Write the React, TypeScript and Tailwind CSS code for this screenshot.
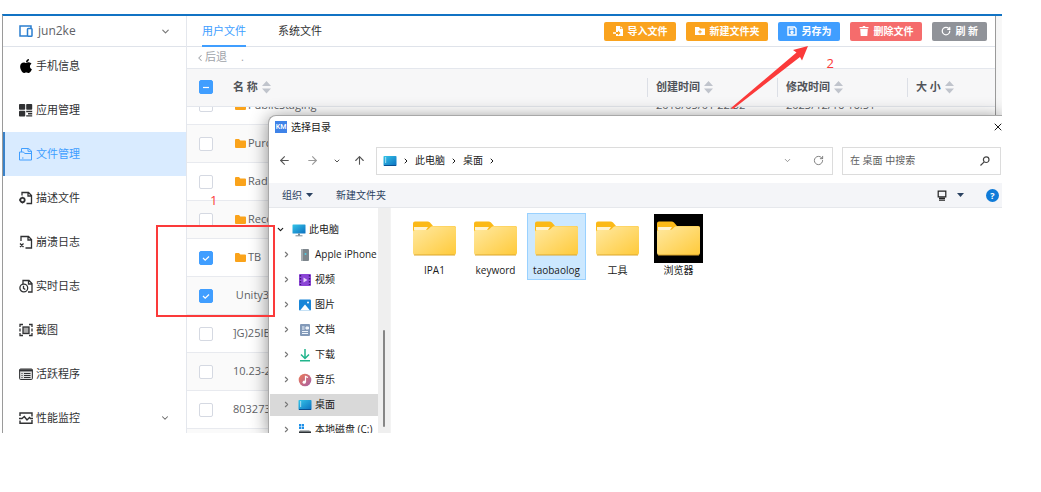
import React from "react";
import { FaApple } from "react-icons/fa";
import {
  ArrowLeft,
  ArrowRight,
  ArrowUp,
  ChevronDown,
  ChevronLeft,
  ChevronRight,
  RotateCw,
  X,
} from "lucide-react";

const files = [
  { name: "PublicStaging", folder: true, created: "2018/05/01 22:52", modified: "2023/12/16 16:51" },
  { name: "Purc", folder: true },
  { name: "Radi", folder: true },
  { name: "Reco", folder: true },
  { name: "TB", folder: true, checked: true },
  { name: " Unity3", checked: true },
  { name: "]G)25IE" },
  { name: "10.23-2" },
  { name: "803273" },
  { name: "" },
];

const docPath = "M4 5V1.5h6L13 4.5V13H9M9.5 1.5V5H13";

const menu = [
  { label: "手机信息", icon: <FaApple className="-mx-px size-4 text-black" /> },
  {
    label: "应用管理",
    icon: (
      <svg viewBox="0 0 14 14" className="size-[14px]" fill="currentColor">
        <rect x="0" y="1" width="6.2" height="5.8" rx="0.8" />
        <rect x="7.2" y="1" width="6" height="5.8" rx="0.8" />
        <rect x="0" y="7.8" width="6.2" height="5.8" rx="0.8" />
        <path d="M7.2 7.8h6v1.500h-6zM9 10h4.200v1.400H9zM7.200 12.200h6v1.400h-6z" />
      </svg>
    ),
  },
  {
    label: "文件管理",
    active: true,
    icon: (
      <svg viewBox="0 0 14 14" className="size-[14px]" fill="none" stroke="currentColor">
        <path d="M2.500 5V1.500h7L12.500 4v9M.5 13V5h4l1.200 1.500h6.800M9 1.500V4.300h3.500M.5 13h12M3 11h1.500" />
      </svg>
    ),
  },
  {
    label: "描述文件",
    icon: (
      <svg viewBox="0 0 14 14" className="size-[14px]" fill="none" stroke="currentColor" strokeWidth="1.3">
        <path d="M3 4.500V1.500h6.500L12.500 4.500V12.500H7.500M9 1.500V5h3.500" />
        <circle cx="3.500" cy="9" r="2.200" strokeWidth="1.800" />
        <path d="M3.500 5.800v1M3.500 11.500v1M.2 9h1" />
      </svg>
    ),
  },
  {
    label: "崩溃日志",
    icon: (
      <svg viewBox="0 0 14 14" className="size-[14px]" fill="none" stroke="currentColor" strokeWidth="1.3">
        <path d="M2 6V1.500h7.500L12.500 4.500V13H6.500M9 1.500V5h3.500M1 8.500l3.500 3.500M4.500 8.500L1 12" />
      </svg>
    ),
  },
  {
    label: "实时日志",
    icon: (
      <svg viewBox="0 0 14 14" className="size-[14px]" fill="none" stroke="currentColor" strokeWidth="1.3">
        <path d={docPath} />
        <circle cx="4.800" cy="9" r="3.900" />
        <path d="M4.500 6.800v2.500l1.800 1.200" />
      </svg>
    ),
  },
  {
    label: "截图",
    icon: (
      <svg viewBox="0 0 14 14" className="size-[14px]" fill="none" stroke="currentColor" strokeWidth="1.3">
        <path d="M1 4V1.500h3M10 1.500h3V4M13 10v2.500h-3M4 12.500H1V10M1 5.500v3M13 5.500v3" />
        <rect x="4" y="4" width="6" height="6.500" fill="#aaa" />
      </svg>
    ),
  },
  {
    label: "活跃程序",
    icon: (
      <svg viewBox="0 0 14 14" className="size-[14px]" fill="none" stroke="currentColor">
        <rect x="0.600" y="2" width="12.800" height="10.500" rx="1" fill="#ddd" />
        <path d="M.6 3.400h12.800" strokeWidth="2" />
        <path d="M2.500 6.500h1M5 6.500h6.500M2.500 8.500h1M5 8.500h6.500M2.500 10.500h1M5 10.500h6.500" />
      </svg>
    ),
  },
  {
    label: "性能监控",
    arrow: true,
    icon: (
      <svg viewBox="0 0 14 14" className="size-[14px]" fill="none" stroke="currentColor" strokeWidth="1.400">
        <path d="M1 5V2h12v3.500M1 9.500v2.700h12V9M0 7.500h3l2.300-2 2.700 3.500 2.500-2.500 1 1H14" />
      </svg>
    ),
  },
];

const tree = [
  {
    label: "Apple iPhone",
    icon: (
      <svg viewBox="0 0 14 14" className="size-[14px]">
        <rect x="3" y="1" width="8" height="12" rx="1" fill="#7d868c" />
        <rect x="3" y="1" width="2" height="12" fill="#a3abb0" />
        <circle cx="7.500" cy="6" r="1" fill="#4fd0e8" />
      </svg>
    ),
  },
  {
    label: "视频",
    icon: (
      <svg viewBox="0 0 14 14" className="size-[14px]">
        <rect x="1" y="1" width="12" height="12" rx="1" fill="#8b45d6" />
        <path d="M2.500 2v10M11.500 2v10" stroke="#3d1673" strokeWidth="1.400" strokeDasharray="1.500 1.500" />
        <path d="M5.500 4.500v5l4-2.500z" fill="#e5d2fb" />
      </svg>
    ),
  },
  {
    label: "图片",
    icon: (
      <svg viewBox="0 0 14 14" className="size-[14px]">
        <rect x="1" y="1.500" width="12" height="11" rx="1" fill="#1a86d8" />
        <path d="M2 12.500l5-6 5 6z" fill="#fff" />
        <circle cx="10" cy="4.500" r="1" fill="#fff" />
      </svg>
    ),
  },
  {
    label: "文档",
    icon: (
      <svg viewBox="0 0 14 14" className="size-[14px]">
        <rect x="2" y="1" width="10" height="12" rx="1" fill="#8299b8" />
        <path d="M4 4h2.500M4 6h2.500M4 8.500h6M4 10.500h6M8 4h2.500v2H8z" stroke="#eef4fb" fill="#eef4fb" />
      </svg>
    ),
  },
  {
    label: "下载",
    icon: (
      <svg viewBox="0 0 14 14" className="size-[14px]" fill="none" stroke="#22b58c" strokeWidth="1.500">
        <path d="M7 1v9M3 6.500l4 4 4-4M2 12.800h10" />
      </svg>
    ),
  },
  {
    label: "音乐",
    icon: (
      <svg viewBox="0 0 14 14" className="size-[14px]">
        <defs>
          <linearGradient id="music" x1="0" y1="0" x2="1" y2="1">
            <stop offset="0" stopColor="#ee7a55" />
            <stop offset="1" stopColor="#a55fa8" />
          </linearGradient>
        </defs>
        <circle cx="7" cy="7" r="6.300" fill="url(#music)" />
        <path d="M7.500 9V3.500l2.500 1" stroke="#fff" strokeWidth="1.200" fill="none" />
        <circle cx="6.200" cy="9.200" r="1.600" fill="#fff" />
      </svg>
    ),
  },
  { label: "桌面", selected: true, icon: <DesktopIcon /> },
  {
    label: "本地磁盘 (C:)",
    icon: (
      <svg viewBox="0 0 14 14" className="size-[14px]">
        <path d="M1 1h2.200v2.200H1zM3.800 1H6v2.200H3.800zM1 3.800h2.200V6H1zM3.800 3.800H6V6H3.800z" fill="#1e90e8" />
        <path d="M2 7h9l2 2H1z" fill="#b5babd" />
        <rect x="1" y="8.500" width="12" height="3" fill="#2c3236" />
      </svg>
    ),
  },
];

const folders = [
  { name: "IPA1" },
  { name: "keyword" },
  { name: "taobaolog", selected: true },
  { name: "工具" },
  { name: "浏览器", dark: true },
];

function DesktopIcon() {
  return (
    <svg viewBox="0 0 14 14" className="size-[14px] shrink-0">
      <defs>
        <linearGradient id="desk" x1="0" y1="0" x2="1" y2="1">
          <stop offset="0" stopColor="#35c5e8" />
          <stop offset="1" stopColor="#0b6fc0" />
        </linearGradient>
      </defs>
      <rect x="0.500" y="2" width="13" height="10" rx="0.800" fill="url(#desk)" />
      <path d="M2 4h1.200M2 6h1.200M2 8h1.200" stroke="#fff" />
      <path d="M1 11.500h12" stroke="#0a4f92" />
    </svg>
  );
}

function ComputerIcon() {
  return (
    <svg viewBox="0 0 14 14" className="size-[14px] shrink-0">
      <rect x="0.500" y="1.500" width="13" height="9" rx="0.600" fill="url(#desk)" />
      <path d="M6 10.500h2v2H6z" fill="#7b8b95" />
      <path d="M3.500 12.800h7" stroke="#7b8b95" />
    </svg>
  );
}

function BigFolder() {
  return (
    <svg viewBox="0 0 43 35" className="h-[35px] w-[43px]">
      <defs>
        <linearGradient id="folder" x1="0" y1="0" x2="1" y2="1">
          <stop offset="0" stopColor="#ffe9a2" />
          <stop offset="1" stopColor="#ffca3a" />
        </linearGradient>
      </defs>
      <path d="M0 2.500Q0 .5 2 .5h12.500q1.500 0 2.500 1l3 3.500H41q2 0 2 2V20H0z" fill="#fbb917" />
      <path d="M1 6h14l-2 3H1z" fill="#fff3d0" />
      <path d="M0 10.500Q0 9 2 9h11q1.500 0 2.500-1l2-2q.8-.800 2-.800H41q2 0 2 2V32q0 2-2 2H2q-2 0-2-2z" fill="url(#folder)" />
      <path d="M1 34h41" stroke="#dba62c" />
    </svg>
  );
}

function SmallFolder() {
  return (
    <svg viewBox="0 0 11 9" className="ml-0.5 mr-0.5 h-[9px] w-[11px] shrink-0" fill="#faa31b">
      <path d="M0 1Q0 0 1 0h3l1.300 1.400H10q1 0 1 1V8q0 1-1 1H1Q0 9 0 8z" />
    </svg>
  );
}

function Sort() {
  return (
    <svg viewBox="0 0 9 14" className="ml-1 h-[14px] w-[9px]" fill="#c0c4cc">
      <path d="M0 6l4.500-5L9 6zM0 8.500h9l-4.500 5z" />
    </svg>
  );
}

function Checkbox({ label, checked, minus }: { label: string; checked?: boolean; minus?: boolean }) {
  return (
    <label className="mx-auto grid size-[14px] place-items-center">
      <input
        type="checkbox"
        aria-label={label}
        defaultChecked={checked}
        className="peer col-start-1 row-start-1 size-[14px] appearance-none rounded-xs border border-[#d5d9e2] bg-white checked:border-[#409eff] checked:bg-[#409eff]"
      />
      <svg
        viewBox="0 0 14 14"
        className="pointer-events-none col-start-1 row-start-1 size-[14px] opacity-0 peer-checked:opacity-100"
        fill="none"
        stroke="#fff"
        strokeWidth="1.200"
      >
        <path d={minus ? "M4 7.500h6" : "M4 7l2.200 2.200L10 5.500"} />
      </svg>
    </label>
  );
}

function Columns() {
  return (
    <colgroup>
      <col className="w-[38px]" />
      <col />
      <col className="w-[130px]" />
      <col className="w-[130px]" />
      <col className="w-[88px]" />
    </colgroup>
  );
}

function Sidebar() {
  return (
    <aside className="w-[184px] shrink-0 border-r border-[#e4e7ed] bg-white">
      <button type="button" className="flex h-[31px] w-full items-center border-b border-[#dfe3ea] pl-4 pr-[15px] text-[12px] text-[#606266]">
        <svg viewBox="0 0 14 14" className="mr-[5px] size-[14px]" fill="none" stroke="#2b7fd0" strokeWidth="1.500">
          <path d="M8 12H1V2h11v2" />
          <rect x="8.500" y="4.500" width="4.500" height="7.800" rx="0.800" />
        </svg>
        jun2ke
        <ChevronDown className="ml-auto size-[11px] text-[#777]" strokeWidth={2.5} />
      </button>
      <nav className="-mt-[3px] text-[11px] text-[#303133]">
        {menu.map((item) => (
          <a
            key={item.label}
            href="#"
            className={
              item.active
                ? "flex h-11 items-center gap-[3px] border-l-2 border-[#3a82c8] bg-[#d9ebff] pl-[14px] text-[#409eff]"
                : "flex h-11 items-center gap-[3px] pl-4 pr-4"
            }
          >
            {item.icon}
            {item.label}
            {item.arrow && <ChevronDown className="ml-auto size-[10px] text-[#666]" strokeWidth={2.5} />}
          </a>
        ))}
      </nav>
    </aside>
  );
}

const btn = "flex h-[19px] items-center gap-1 rounded-xs px-[9px] text-[10px] font-semibold text-white";

function Toolbar() {
  return (
    <div className="flex h-[31px] items-center border-b border-[#dfe3ea] pl-[15px] pr-2 text-[11px]">
      <div className="flex h-[31px] gap-8">
        <button type="button" className="border-b-2 border-[#409eff] pt-0.5 text-[#409eff]">
          用户文件
        </button>
        <button type="button" className="border-b-2 border-transparent pt-0.5 text-[#303133]">
          系统文件
        </button>
      </div>
      <div className="ml-auto flex gap-[10px]">
        <button type="button" className={`${btn} bg-[#faa31e]`}>
          <svg viewBox="0 0 10 10" className="size-[10px]" fill="#fff">
            <path d="M3 0h4v3h3v7H3V8h2v1.500L7.500 7 5 4.500V6H3z" />
            <path d="M7.600 0L10 2.400H7.600zM0 6.200h3v1.600H0z" />
          </svg>
          导入文件
        </button>
        <button type="button" className={`${btn} bg-[#faa31e]`}>
          <svg viewBox="0 0 10 10" className="size-[10px]" fill="#fff">
            <path d="M0 1h4l1 1.500h5V9H0z" />
            <path d="M5 4v3.600M3.200 5.800h3.600" stroke="#faa31e" />
          </svg>
          新建文件夹
        </button>
        <button type="button" className={`${btn} bg-[#409eff]`}>
          <svg viewBox="0 0 10 10" className="size-[10px]" fill="none" stroke="#fff" strokeWidth="1.400">
            <path d="M1 1h6.500L9 2.500V9H1zM2.500 3h4" />
            <circle cx="5" cy="6.200" r="1" />
          </svg>
          另存为
        </button>
        <button type="button" className={`${btn} bg-[#f56c6c]`}>
          <svg viewBox="0 0 10 10" className="size-[10px]" fill="#fff">
            <path d="M.5 1h3l.5-1h2l.5 1h3v1.200h-9zM1.200 3h7.600l-.5 7H1.700z" />
          </svg>
          删除文件
        </button>
        <button type="button" className={`${btn} bg-[#909399]`}>
          <RotateCw className="size-[10px]" strokeWidth={3} />
          刷 新
        </button>
      </div>
    </div>
  );
}

function FileTable() {
  return (
    <div>
      <table className="w-full table-fixed text-left text-[11px] text-[#505359]">
        <Columns />
        <thead>
          <tr className="h-[37px] border-b border-[#e4e7ed] bg-[#f7f7f8]">
            <th>
              <Checkbox label="全选" checked minus />
            </th>
            {["名 称", "创建时间", "修改时间", "大 小"].map((title, i) => (
              <th key={title} className="font-semibold">
                <div className={i === 0 ? "flex h-[19px] items-center pl-2" : "flex h-[19px] items-center border-l border-[#dcdfe6] pl-2"}>
                  {title}
                  <Sort />
                </div>
              </th>
            ))}
          </tr>
        </thead>
      </table>
      <div className="overflow-hidden">
        <table className="-mt-5 w-full table-fixed text-[11px] text-[#606266]">
          <Columns />
          <tbody>
            {files.map((file, i) => (
              <tr key={i} className="h-[38px] border-b border-[#e8eaef] odd:bg-white even:bg-[#fafafa]">
                <td>
                  <Checkbox label={file.name} checked={file.checked} />
                </td>
                <td className="pl-2">
                  <div className="flex items-center whitespace-pre">
                    {file.folder && <SmallFolder />}
                    {file.name}
                  </div>
                </td>
                <td className="pl-[9px]">{file.created}</td>
                <td className="pl-[9px]">{file.modified}</td>
                <td />
              </tr>
            ))}
          </tbody>
        </table>
      </div>
    </div>
  );
}

function SaveDialog() {
  return (
    <div
      role="dialog"
      aria-label="选择目录"
      className="absolute bottom-0 left-[265px] right-0 top-[99px] flex flex-col rounded-tl-lg border-l border-t border-[#a8a8a8] bg-white text-[10px] text-[#1a1a1a] shadow-[0_2px_18px_rgba(0,0,0,0.45)]"
    >
      <div className="flex h-[22px] shrink-0 items-center pl-1.5">
        <span className="mr-1 grid h-3 w-3 place-items-center bg-[#3f83e8] font-['Roboto',sans-serif] text-[7px] font-medium leading-none text-white">
          KM
        </span>
        选择目录
        <button type="button" aria-label="关闭" className="-mr-0.5 ml-auto">
          <X className="size-3" strokeWidth={2} />
        </button>
      </div>

      <div className="flex h-[45px] shrink-0 items-center pl-[9px] pr-px text-[#555]">
        <button type="button" aria-label="后退">
          <ArrowLeft className="size-[13px]" />
        </button>
        <button type="button" aria-label="前进" className="ml-[15px] text-[#999]">
          <ArrowRight className="size-[13px]" />
        </button>
        <button type="button" aria-label="最近" className="ml-[14px]">
          <ChevronDown className="size-2" strokeWidth={3} />
        </button>
        <button type="button" aria-label="上移" className="ml-3">
          <ArrowUp className="size-[13px]" />
        </button>
        <div className="ml-[10px] flex h-7 flex-1 items-center gap-[5px] border border-[#dcdcdc] pl-1.5 pr-2 text-[#1a1a1a]">
          <DesktopIcon />
          <ChevronRight className="size-2" strokeWidth={3} />
          此电脑
          <ChevronRight className="size-2" strokeWidth={3} />
          桌面
          <ChevronRight className="size-2" strokeWidth={3} />
          <ChevronDown className="ml-auto size-[9px] text-[#777]" />
          <RotateCw className="ml-4 size-[11px] text-[#777]" />
        </div>
        <div className="ml-[9px] flex h-7 w-[159px] items-center border border-[#dcdcdc] pl-[7px] pr-[10px]">
          <input
            type="text"
            aria-label="搜索"
            placeholder="在 桌面 中搜索"
            className="w-full min-w-0 outline-none placeholder:text-[#606060]"
          />
          <svg viewBox="0 0 10 10" className="size-[10px] shrink-0" fill="none" stroke="#444" strokeWidth="1.200">
            <circle cx="6.200" cy="3.700" r="2.800" />
            <path d="M4.200 5.800L.5 9.500" />
          </svg>
        </div>
      </div>

      <div className="flex h-[25px] shrink-0 items-center border-b border-[#e6e8ec] bg-[#f4f5f8] pl-[13px] pr-[3px] text-[#2b4261]">
        <button type="button" className="flex items-center gap-1">
          组织
          <svg viewBox="0 0 7 4" className="h-1 w-[7px]" fill="currentColor">
            <path d="M0 0h7L3.500 4z" />
          </svg>
        </button>
        <button type="button" className="ml-[23px]">
          新建文件夹
        </button>
        <button type="button" aria-label="视图" className="ml-auto flex items-center gap-[10px]">
          <svg viewBox="0 0 10 11" className="h-[11px] w-[10px]" fill="none" stroke="#222" strokeWidth="1.200">
            <path d="M1.200 1.200h7.600v5.600H1.200zM2 8.300h6M2 10.200h6" />
          </svg>
          <svg viewBox="0 0 7 4" className="h-1 w-[7px]" fill="currentColor">
            <path d="M0 0h7L3.500 4z" />
          </svg>
        </button>
        <button type="button" className="ml-[22px] grid size-[13px] place-items-center rounded-full bg-[#0f7bd8] text-[9px] font-bold leading-none text-white">
          ?
        </button>
      </div>

      <div className="flex min-h-0 flex-1 overflow-hidden">
        <ul className="w-[109px] shrink-0 whitespace-nowrap pl-px pt-[9px]">
          <li className="flex h-[25px] items-center pl-1.5">
            <ChevronDown className="mr-[7px] size-[9px]" strokeWidth={3} />
            <ComputerIcon />
            <span className="ml-[3px]">此电脑</span>
          </li>
          {tree.map((node) => (
            <li key={node.label} className="flex h-[25px] items-center">
              <div className={node.selected ? "flex h-[22px] w-full items-center bg-[#d9d9d9] pl-3" : "flex h-[22px] w-full items-center pl-3"}>
                <ChevronRight className="mr-[7px] size-[9px] shrink-0 text-[#777]" strokeWidth={3} />
                <span className="shrink-0">{node.icon}</span>
                <span className="ml-[3px]">{node.label}</span>
              </div>
            </li>
          ))}
        </ul>
        <div className="flex w-3 shrink-0 flex-col items-center bg-[#efefef] pb-1.5 pt-[122px]">
          <div className="w-0.5 flex-1 rounded bg-[#868686]" />
        </div>
        <ul className="flex flex-1 items-start gap-0.5 border-l border-[#f3f3f3] pl-[14px] pt-[5px]">
          {folders.map((folder) => (
            <li
              key={folder.name}
              className={
                folder.selected
                  ? "flex w-[59px] flex-col items-center border border-[#99d1ff] bg-[#cce8ff]"
                  : "flex w-[59px] flex-col items-center border border-transparent"
              }
            >
              <div className={folder.dark ? "grid size-[49px] place-items-center bg-black" : "grid size-[49px] place-items-center"}>
                <BigFolder />
              </div>
              <span className="h-4 leading-[14px]">{folder.name}</span>
            </li>
          ))}
        </ul>
      </div>
    </div>
  );
}

function Annotations() {
  return (
    <>
      <div className="absolute left-[153px] top-[209px] h-[92px] w-[119px] border-2 border-[#fb3a3a]" />
      <span className="absolute left-[207px] top-[175px] text-[13px] text-[#fb3a3a]">1</span>
      <span className="absolute right-[168px] top-[38px] text-[13px] text-[#fb3a3a]">2</span>
      <svg viewBox="0 0 78 64" className="absolute right-[193px] top-[30px] h-16 w-[78px]" fill="#fb3a3a">
        <path d="M77 0L62 4l3.500 2.500L0 62l2 1L69 11l2 3.500z" />
      </svg>
    </>
  );
}

export default function App() {
  return (
    <div className="h-screen bg-white pb-[59px] pl-0.5 pr-[39px] pt-3.5 font-['Open_Sans','Noto_Sans_CJK_SC',sans-serif]">
      <div className="relative h-full overflow-hidden border-l border-t-2 border-l-[#9a9a9a] border-t-[#1173c4] bg-linear-to-l from-[#f8f8f8] to-[#dedede] to-5%">
        <div className="mr-[6px] flex h-full overflow-hidden border-r border-[#9a9a9a] bg-white">
          <Sidebar />
          <main className="min-w-0 flex-1">
            <Toolbar />
            <div className="flex h-[22px] items-center border-b border-[#e4e7ed] pl-2 text-[11px] text-[#a0a3a9]">
              <button type="button" className="flex items-center">
                <ChevronLeft className="size-[10px]" strokeWidth={2.5} />
                后退
              </button>
              <span className="ml-[14px]">.</span>
            </div>
            <FileTable />
          </main>
        </div>
        <SaveDialog />
        <Annotations />
      </div>
    </div>
  );
}
